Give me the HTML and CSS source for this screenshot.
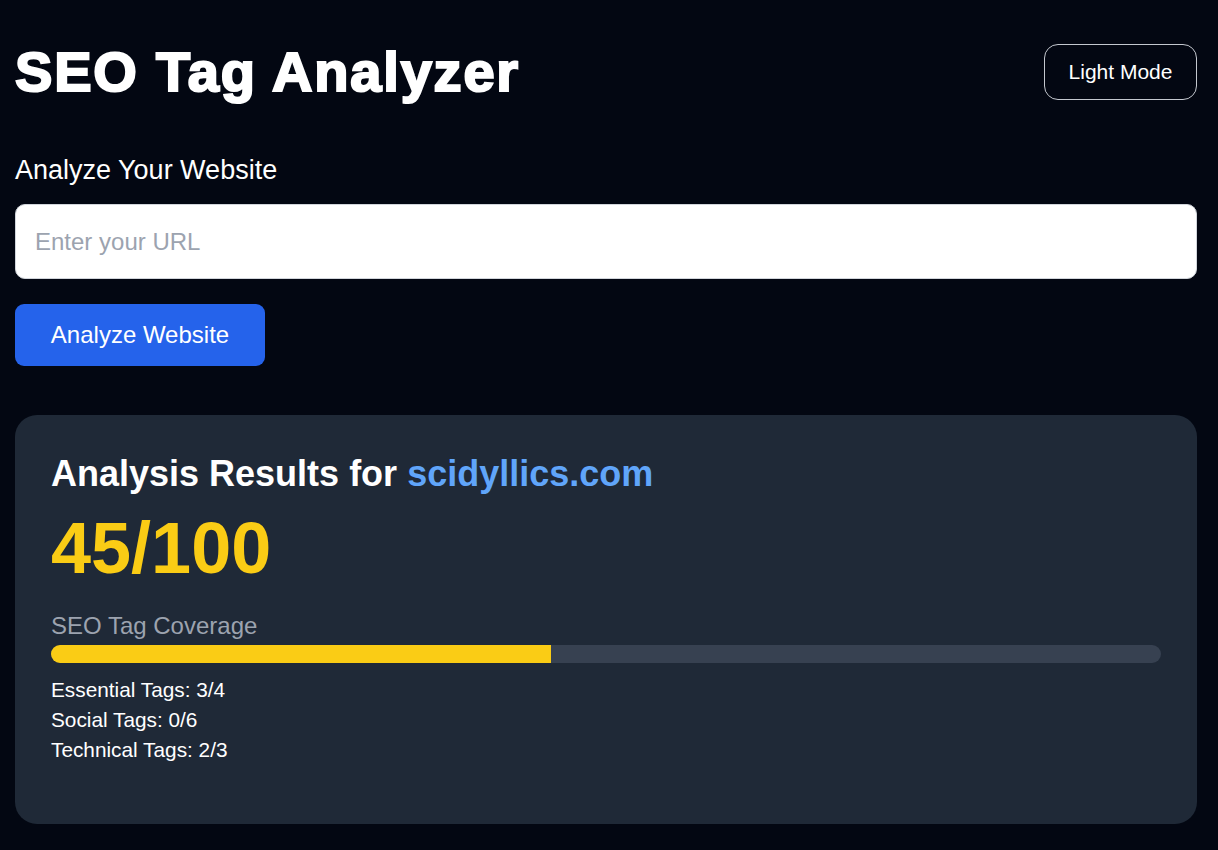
FILE: index.html
```html
<!DOCTYPE html>
<html lang="en">
<head>
<meta charset="utf-8">
<title>SEO Tag Analyzer</title>
<link rel="stylesheet" href="styles.css">
</head>
<body>
<main class="page">
  <header class="header">
    <h1 class="title">SEO Tag Analyzer</h1>
    <button class="mode-btn" type="button">Light Mode</button>
  </header>
  <section class="form">
    <label class="label" for="url">Analyze Your Website</label>
    <input class="url-input" id="url" type="text" placeholder="Enter your URL">
    <button class="analyze-btn" type="button">Analyze Website</button>
  </section>
  <section class="card">
    <h2 class="card-title">Analysis Results for <span class="domain">scidyllics.com</span></h2>
    <div class="score">45/100</div>
    <div class="coverage-label">SEO Tag Coverage</div>
    <div class="track"><div class="fill" style="width:45%"></div></div>
    <ul class="tags">
      <li>Essential Tags: 3/4</li>
      <li>Social Tags: 0/6</li>
      <li>Technical Tags: 2/3</li>
    </ul>
  </section>
</main>
</body>
</html>
```
FILE: styles.css
```css
* { box-sizing: border-box; }
html, body { margin: 0; padding: 0; }
body {
  background: #030712;
  color: #ffffff;
  font-family: "Liberation Sans", Arial, sans-serif;
}
.page {
  padding: 44px 21px 24px 15px;
}
.header {
  display: flex;
  justify-content: space-between;
  align-items: center;
}
.title {
  margin: 0;
  font-size: 56px;
  font-weight: 700;
  line-height: 56px;
  letter-spacing: 1.8px;
  -webkit-text-stroke: 2.2px #ffffff;
}
.mode-btn {
  width: 153px;
  height: 56px;
  background: transparent;
  color: #ffffff;
  border: 1px solid #c4c8cf;
  border-radius: 14px;
  font-family: inherit;
  font-size: 21px;
}
.form {
  display: flex;
  flex-direction: column;
  align-items: flex-start;
  margin-top: 55px;
}
.label {
  font-size: 27px;
  line-height: 30px;
}
.url-input {
  margin-top: 19px;
  width: 100%;
  height: 75px;
  padding: 0 19px;
  border: 1px solid #d1d5db;
  border-radius: 10px;
  background: #ffffff;
  font-family: inherit;
  font-size: 24px;
  color: #111827;
}
.url-input::placeholder { color: #9ca3af; }
.analyze-btn {
  margin-top: 25px;
  width: 250px;
  height: 62px;
  background: #2563eb;
  color: #ffffff;
  border: 0;
  border-radius: 9px;
  font-family: inherit;
  font-size: 24px;
}
.card {
  margin-top: 49px;
  background: #1f2937;
  border-radius: 22px;
  padding: 38px 36px 59px;
}
.card-title {
  margin: 0;
  font-size: 36px;
  font-weight: 700;
  line-height: 42px;
}
.domain { color: #60a5fa; }
.score {
  margin-top: 11px;
  font-size: 72px;
  font-weight: 700;
  line-height: 84px;
  color: #facc15;
}
.coverage-label {
  margin-top: 22px;
  font-size: 24px;
  line-height: 28px;
  color: #9ca3af;
}
.track {
  margin-top: 5px;
  height: 18px;
  border-radius: 9px;
  background: #374151;
  overflow: hidden;
}
.fill {
  height: 100%;
  background: #facc15;
}
.tags {
  list-style: none;
  margin: 12px 0 0;
  padding: 0;
  font-size: 20.8px;
  line-height: 30px;
}
```
